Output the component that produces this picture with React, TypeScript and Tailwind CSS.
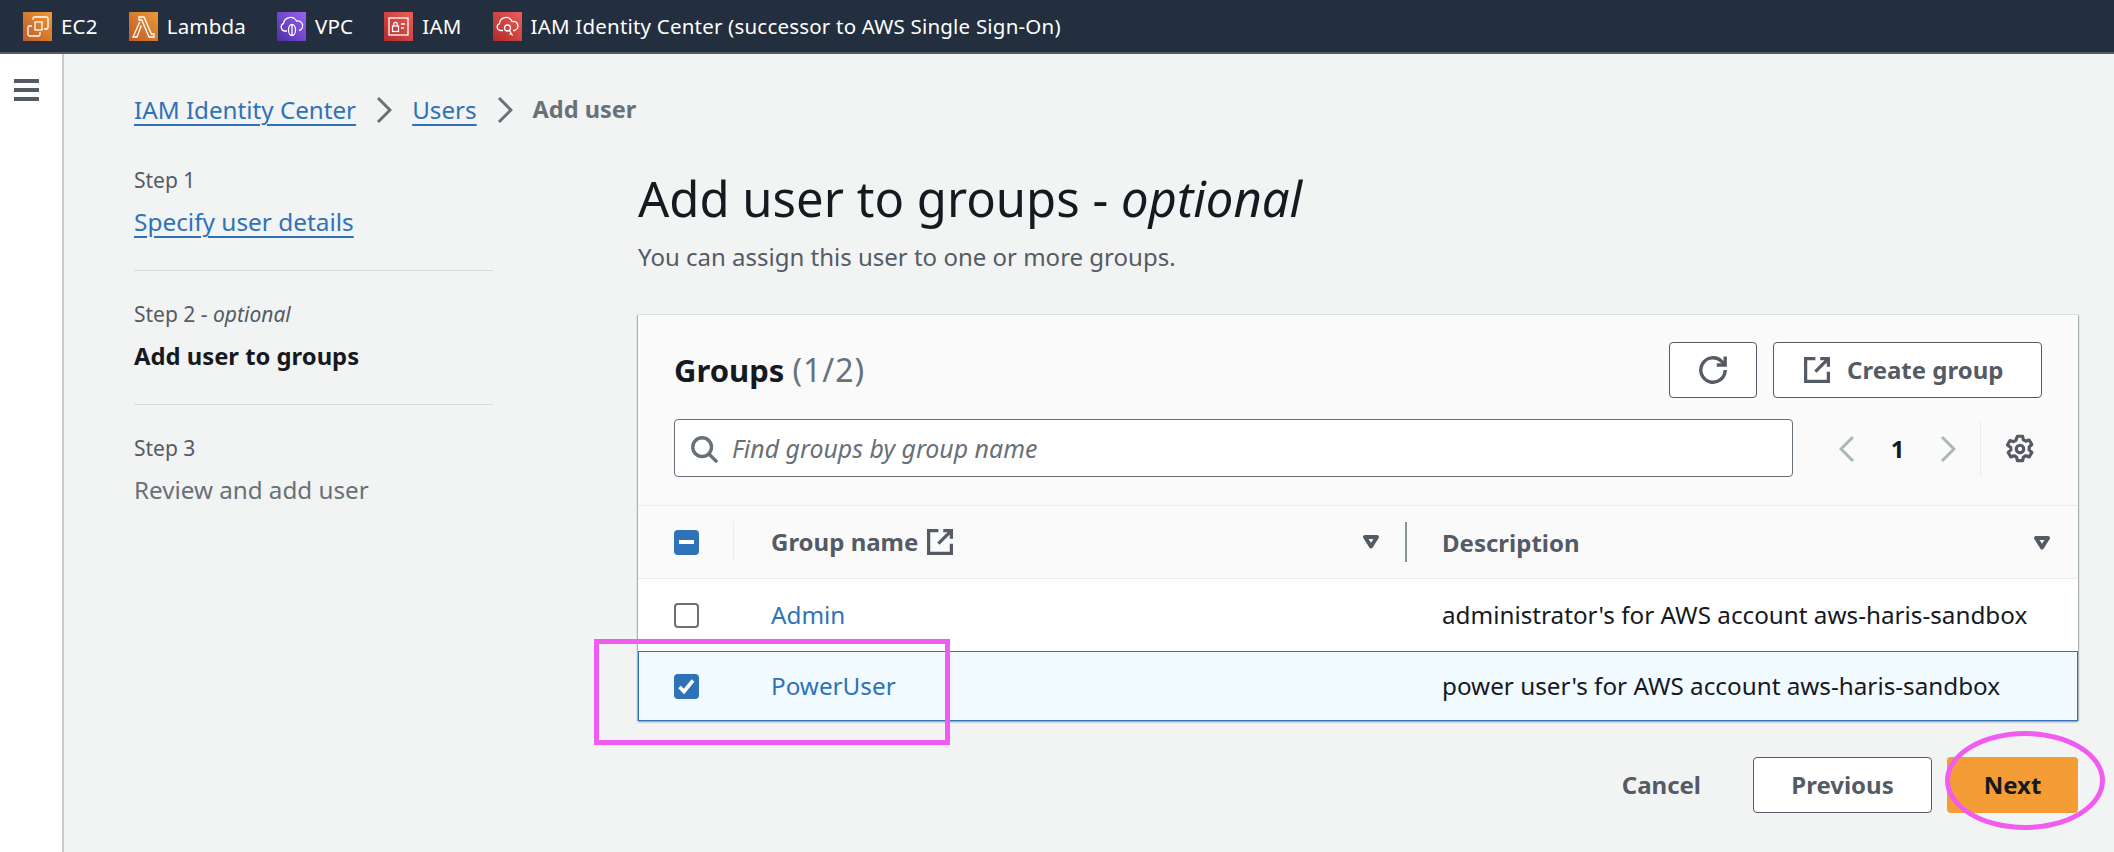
import React from "react";

const Gear = () => (
  <svg width="30" height="30" viewBox="0 0 16 16" fill="none" stroke="#545b64" strokeWidth="1.7" strokeLinejoin="round">
    <path d="M6.6 1.2h2.8l.4 1.9 1.3.7 1.8-.6 1.4 2.4-1.4 1.3v1.6l1.4 1.3-1.4 2.4-1.8-.6-1.3.7-.4 1.9H6.6l-.4-1.9-1.3-.7-1.8.6-1.4-2.4 1.4-1.3V7.2L1.3 5.9l1.4-2.4 1.8.6 1.3-.7z" />
    <circle cx="8" cy="8" r="2" />
  </svg>
);

const External = () => (
  <svg width="26" height="26" viewBox="0 0 16 16" fill="none" stroke="#545b64" strokeWidth="2" strokeLinejoin="miter">
    <path d="M7 1H1v14h14V9" />
    <path d="M10 1h5v5M15 1L7 9" />
  </svg>
);

const Triangle = () => (
  <svg width="18" height="16" viewBox="0 0 18 16" fill="none" stroke="#545b64" strokeWidth="4" strokeLinejoin="round">
    <path d="M3 3h12L9 12.5z" />
  </svg>
);

const IconBox = ({ cls, children }: { cls: string; children: React.ReactNode }) => (
  <span className={"block h-[29px] w-[29px] " + cls}>
    <svg width="29" height="29" viewBox="0 0 29 29" fill="none" stroke="white" strokeWidth="1.3">
      {children}
    </svg>
  </span>
);

const services: { label: string; icon: React.ReactNode }[] = [
  {
    label: "EC2",
    icon: (
      <IconBox cls="bg-gradient-to-tr from-[#bf5a26] to-[#ee9a37]">
        <path d="M10 8V6.5a1.5 1.5 0 0 1 1.5-1.5h12A1.5 1.5 0 0 1 25 6.500v9a1.500 1.500 0 0 1-1.500 1.500H21" />
        <path d="M9 14H6.500A1.500 1.500 0 0 0 5 15.500v7A1.500 1.500 0 0 0 6.500 24h9a1.500 1.500 0 0 0 1.500-1.500V20" />
        <rect x="12" y="10" width="7" height="8" />
      </IconBox>
    ),
  },
  {
    label: "Lambda",
    icon: (
      <IconBox cls="bg-gradient-to-tr from-[#bf5a26] to-[#ee9a37]">
        <path d="M10 5h5l7.500 17H25v3h-5L12.800 8H10z" />
        <path d="M12.300 13.500L8 25H4l6.700-15" />
      </IconBox>
    ),
  },
  {
    label: "VPC",
    icon: (
      <IconBox cls="bg-gradient-to-tr from-[#4f2da7] to-[#9a62f0]">
        <path d="M10 19H8a4 4 0 0 1-1.500-7.600A7 7 0 0 1 19.500 9a4.500 4.500 0 0 1 2.500 9.500" />
        <ellipse cx="15" cy="18" rx="3.500" ry="5.500" />
        <path d="M15 12.500v11" />
      </IconBox>
    ),
  },
  {
    label: "IAM",
    icon: (
      <IconBox cls="bg-gradient-to-tr from-[#b32a2a] to-[#e85e5a]">
        <rect x="5" y="6" width="19" height="17" />
        <rect x="8.500" y="14" width="6" height="5.500" />
        <path d="M9.800 14v-2a1.700 1.700 0 0 1 3.400 0v2M17 12h4M17 16h3" />
      </IconBox>
    ),
  },
  {
    label: "IAM Identity Center (successor to AWS Single Sign-On)",
    icon: (
      <IconBox cls="bg-gradient-to-tr from-[#b32a2a] to-[#e85e5a]">
        <path d="M10 18.500H7.500a3.500 3.500 0 0 1-1-6.800A6.500 6.500 0 0 1 19 9.500a4.500 4.500 0 0 1 2.500 9H20" />
        <circle cx="14.500" cy="16" r="3" />
        <path d="M16.500 18.500l3 5M18 21.500l-1.500 1" />
      </IconBox>
    ),
  },
];

const Check = ({ kind }: { kind: "none" | "indeterminate" | "checked" }) => {
  if (kind === "none")
    return <span className="block h-[25px] w-[25px] rounded-[4px] border-2 border-[#687078] bg-white" />;
  return (
    <span className="flex h-[25px] w-[25px] items-center justify-center rounded-[4px] bg-[#2f72b8]">
      {kind === "indeterminate" ? (
        <span className="block h-[4px] w-[15px] bg-white" />
      ) : (
        <svg width="19" height="17" viewBox="0 0 19 17" fill="none" stroke="white" strokeWidth="3.6">
          <path d="M2.500 9l4.500 4.500L16 2.500" />
        </svg>
      )}
    </span>
  );
};

const Chevron = ({ dir, color }: { dir: "l" | "r"; color: string }) => (
  <svg width="16" height="28" viewBox="0 0 16 28" fill="none" stroke={color} strokeWidth="3">
    <path d={dir === "l" ? "M14 2L2 14l12 12" : "M2 2l12 12L2 26"} />
  </svg>
);

const ROW = "grid grid-cols-[133px_636px_1fr] items-center";
const LINK = "text-[#2f72b8] underline decoration-2 underline-offset-[5px]";

export default function App() {
  return (
    <div className="relative flex h-[852px] w-[2114px] flex-col overflow-hidden bg-[#f2f3f3] font-['Noto_Sans',sans-serif] text-[#16191f]">
      <header className="flex h-[54px] shrink-0 items-center border-b-2 border-[#545b64] bg-[#232f3e] pl-[23px] text-[20.500px] tracking-[0.2px] text-white">
        {services.map((s) => (
          <div key={s.label} className="mr-[31px] flex items-center gap-[9px] whitespace-nowrap">
            {s.icon}
            <span>{s.label}</span>
          </div>
        ))}
      </header>

      <div className="flex min-h-0 flex-1">
        <aside className="w-[64px] shrink-0 border-r-2 border-[#c6cacc] bg-white pl-[14px] pt-[25px]">
          <div className="flex w-[25px] flex-col gap-[5px]">
            <span className="block h-[4px] bg-[#545b64]" />
            <span className="block h-[4px] bg-[#545b64]" />
            <span className="block h-[4px] bg-[#545b64]" />
          </div>
        </aside>

        <main className="min-w-0 flex-1 pl-[70px] pr-[36px]">
          <nav className="flex h-[112px] items-center text-[24.200px]">
            <a className={LINK}>IAM Identity Center</a>
            <span className="mx-[20px] flex"><Chevron dir="r" color="#687078" /></span>
            <a className={LINK}>Users</a>
            <span className="mx-[20px] flex"><Chevron dir="r" color="#687078" /></span>
            <span className="text-[23.500px] font-bold text-[#687078]">Add user</span>
          </nav>

          <div className="flex">
            <ol className="w-[359px] shrink-0 text-[24.400px]">
              <li className="h-[105px] border-b border-[#d5dbdb]">
                <div className="text-[21px] leading-[28px] text-[#545b64]">Step 1</div>
                <a className={"mt-[12px] block leading-[32px] " + LINK}>Specify user details</a>
              </li>
              <li className="h-[134px] border-b border-[#d5dbdb] pt-[29px]">
                <div className="text-[21px] leading-[28px] text-[#545b64]">Step 2 - <i>optional</i></div>
                <div className="mt-[12px] text-[23.800px] font-bold leading-[32px]">Add user to groups</div>
              </li>
              <li className="pt-[29px]">
                <div className="text-[21px] leading-[28px] text-[#545b64]">Step 3</div>
                <div className="mt-[12px] text-[24.200px] leading-[32px] text-[#687078]">Review and add user</div>
              </li>
            </ol>

            <div className="ml-[145px] w-[1440px] min-w-0">
              <h1 className="text-[49px] leading-[64px]">Add user to groups - <i>optional</i></h1>
              <p className="mt-[11px] text-[24px] leading-[32px] text-[#545b64]">You can assign this user to one or more groups.</p>

              <section className="mt-[42px] bg-white shadow-[0_1px_2px_rgba(0,28,36,0.4),-1px_0_1px_rgba(0,28,36,0.2),1px_0_1px_rgba(0,28,36,0.2)]">
                <div className="bg-[#fafafa]">
                  <div className="flex items-center justify-between px-[36px] pt-[27px]">
                    <h2 className="text-[31px] font-bold leading-[56px]">
                      Groups <span className="text-[32px] font-normal tracking-[1px] text-[#687078]">(1/2)</span>
                    </h2>
                    <div className="flex gap-[16px]">
                      <button className="flex h-[56px] w-[88px] items-center justify-center rounded-[4px] border border-[#545b64] bg-white">
                        <svg width="30" height="30" viewBox="0 0 16 16" fill="none" stroke="#545b64" strokeWidth="1.800">
                          <path d="M14.500 8a6.500 6.500 0 1 1-1.900-4.600L14.200 5" />
                          <path d="M14.500 0.800V5.300H10" />
                        </svg>
                      </button>
                      <button className="flex h-[56px] w-[269px] items-center gap-[17px] rounded-[4px] border border-[#545b64] bg-white pl-[30px] text-[24px] font-bold text-[#545b64]">
                        <External />
                        Create group
                      </button>
                    </div>
                  </div>

                  <div className="flex h-[108px] items-start border-b border-[#eaeded] pl-[36px] pt-[21px]">
                    <div className="flex h-[58px] w-[1119px] items-center rounded-[4px] border border-[#687078] bg-white pl-[14px] pt-[1px] text-[24.900px] italic text-[#687078]">
                      <svg width="30" height="30" viewBox="0 0 16 16" fill="none" stroke="#687078" strokeWidth="1.800" className="mr-[13px]">
                        <circle cx="7" cy="7" r="5" />
                        <path d="M10.500 10.500L15 15" />
                      </svg>
                      Find groups by group name
                    </div>
                    <div className="flex h-[58px] items-center pl-[46px] pt-[2px]">
                      <Chevron dir="l" color="#aab7b8" />
                      <span className="w-[85px] text-center text-[24px] font-bold">1</span>
                      <Chevron dir="r" color="#aab7b8" />
                      <span className="ml-[24px] h-[56px] w-px bg-[#eaeded]" />
                      <span className="ml-[24px] flex"><Gear /></span>
                    </div>
                  </div>

                  <div className={ROW + " h-[73px] border-b border-[#eaeded] text-[24px] font-bold text-[#545b64]"}>
                    <div className="flex h-full items-center justify-between pl-[36px]">
                      <Check kind="indeterminate" />
                      <span className="mr-[37px] h-[40px] w-px bg-[#eaeded]" />
                    </div>
                    <div className="relative flex h-full items-center">
                      <span>Group name</span>
                      <span className="ml-[9px] flex"><External /></span>
                      <span className="ml-auto mr-[27px] flex"><Triangle /></span>
                      <span className="absolute right-0 top-[16px] h-[40px] w-[2px] bg-[#879596]" />
                    </div>
                    <div className="flex h-full items-center justify-between pl-[35px] pr-[27px] pt-[1px]">
                      <span>Description</span>
                      <Triangle />
                    </div>
                  </div>
                </div>

                <div className={ROW + " h-[72px] text-[24.250px]"}>
                  <div className="pl-[36px]"><Check kind="none" /></div>
                  <a className="text-[#2f72b8]">Admin</a>
                  <div className="pl-[35px]">administrator's for AWS account aws-haris-sandbox</div>
                </div>
                <div className={ROW + " h-[70px] bg-[#f1faff] text-[24.250px] shadow-[inset_0_0_0_1px_#2f72b8]"}>
                  <div className="pl-[36px]"><Check kind="checked" /></div>
                  <a className="text-[#2f72b8]">PowerUser</a>
                  <div className="pl-[35px]">power user's for AWS account aws-haris-sandbox</div>
                </div>
              </section>

              <div className="mt-[36px] flex items-center justify-end text-[24px] font-bold">
                <span className="mr-[52px] text-[#545b64]">Cancel</span>
                <button className="h-[56px] w-[179px] rounded-[4px] border border-[#545b64] bg-white text-[#545b64]">Previous</button>
                <button className="ml-[15px] h-[56px] w-[131px] rounded-[4px] bg-[#f49d37]">Next</button>
              </div>
            </div>
          </div>
        </main>
      </div>

      <div className="absolute left-[594px] top-[639px] h-[106px] w-[356px] border-[5px] border-[#f05cf0]" />
      <div className="absolute left-[1945px] top-[731px] h-[99px] w-[160px] rounded-[50%] border-[5px] border-[#f05cf0]" />
    </div>
  );
}
